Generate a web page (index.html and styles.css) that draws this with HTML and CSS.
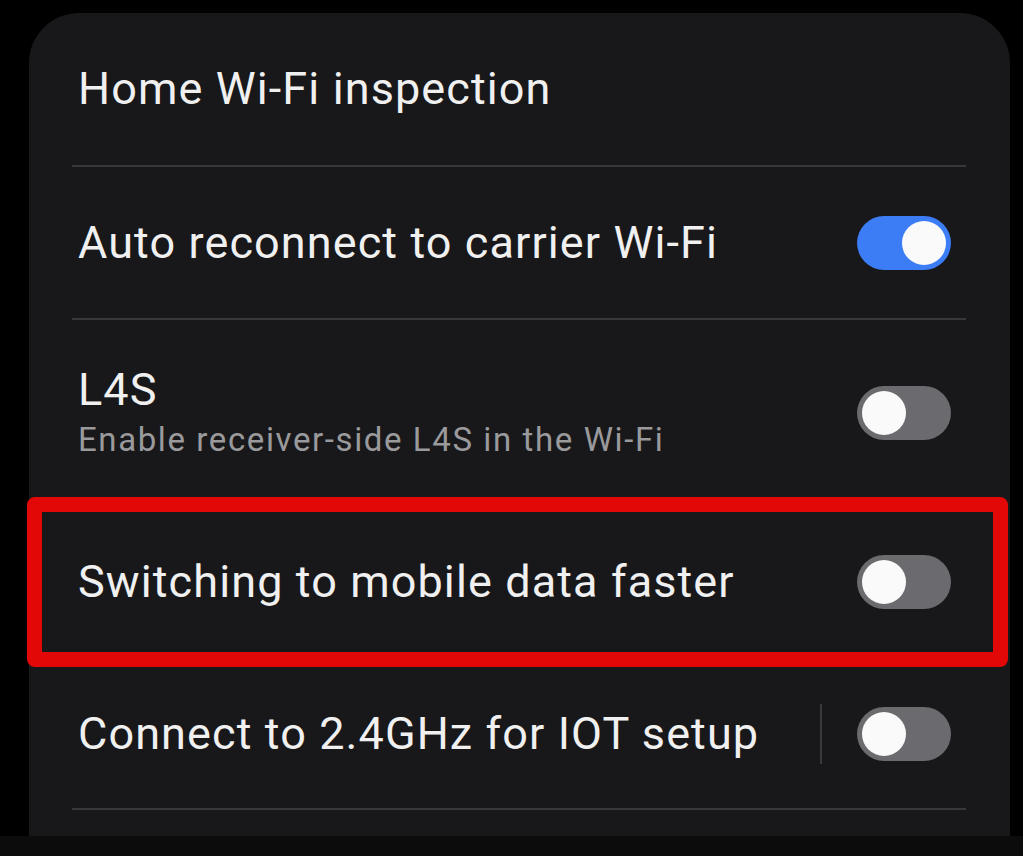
FILE: index.html
```html
<!DOCTYPE html>
<html>
<head>
<meta charset="utf-8">
<link rel="stylesheet" href="styles.css">
</head>
<body>
<div class="screen">
  <div class="card">
    <div class="row row-1">
      <div class="label">Home Wi-Fi inspection</div>
    </div>
    <div class="row row-2">
      <div class="label">Auto reconnect to carrier Wi-Fi</div>
      <div class="toggle on"><span class="knob"></span></div>
    </div>
    <div class="row row-3">
      <div class="texts">
        <div class="label">L4S</div>
        <div class="sub">Enable receiver-side L4S in the Wi-Fi</div>
      </div>
      <div class="toggle"><span class="knob"></span></div>
    </div>
    <div class="row row-4 highlighted">
      <div class="label">Switching to mobile data faster</div>
      <div class="toggle"><span class="knob"></span></div>
    </div>
    <div class="row row-5">
      <div class="label">Connect to 2.4GHz for IOT setup</div>
      <div class="controls">
        <span class="vsep"></span>
        <div class="toggle"><span class="knob"></span></div>
      </div>
    </div>
  </div>
  <div class="strip"></div>
</div>
</body>
</html>
```

FILE: styles.css
```css
html, body {
  margin: 0;
  padding: 0;
  background: #000;
}
body {
  width: 1023px;
  height: 856px;
  overflow: hidden;
  font-family: Roboto, "Noto Sans", sans-serif;
}
.screen {
  display: flex;
  flex-direction: column;
  height: 856px;
}
.card {
  margin: 13px 13px 0 29px;
  height: 823px;
  background: #18181a;
  border-radius: 50px 50px 0 0;
  padding: 0 44px 0 43px;
  box-sizing: border-box;
  display: flex;
  flex-direction: column;
}
.strip {
  flex: 1;
  background: #0c0c0c;
}
.row {
  display: flex;
  align-items: center;
  justify-content: space-between;
  border-bottom: 2px solid #38383a;
  padding: 0 15px 0 6px;
  box-sizing: content-box;
}
.row-1 { height: 152px; }
.row-2 { height: 151px; }
.row-3 { height: 185px; }
.row-4 { height: 150px; }
.row-5 { height: 149px; }
.label {
  color: #f0f0f0;
  font-size: 45px;
  letter-spacing: 1.1px;
  line-height: 1.2;
}
.texts {
  display: flex;
  flex-direction: column;
  gap: 2px;
}
.sub {
  color: #9a9a9c;
  font-size: 33px;
  letter-spacing: 1.6px;
  line-height: 1.3;
}
.toggle {
  width: 94px;
  height: 54px;
  border-radius: 27px;
  background: #6b6b6f;
  position: relative;
  flex: none;
}
.toggle.on {
  background: #3c7cf4;
}
.knob {
  position: absolute;
  top: 5px;
  left: 5px;
  width: 44px;
  height: 44px;
  border-radius: 50%;
  background: #fafafa;
}
.toggle.on .knob {
  left: auto;
  right: 5px;
}
.controls {
  display: flex;
  align-items: center;
  gap: 35px;
}
.vsep {
  width: 2px;
  height: 60px;
  background: #3a3a3c;
}
.highlighted {
  position: relative;
}
.highlighted::after {
  content: "";
  position: absolute;
  left: -45px;
  right: -42px;
  top: -10px;
  bottom: -10px;
  border: 15px solid #e20808;
  border-radius: 8px;
  pointer-events: none;
}
```
